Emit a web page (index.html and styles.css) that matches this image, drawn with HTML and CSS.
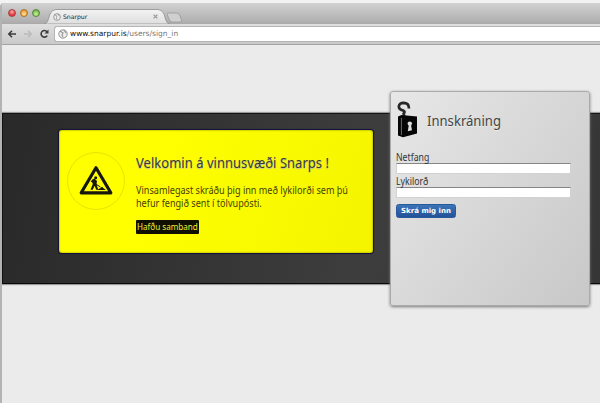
FILE: index.html
```html
<!DOCTYPE html>
<html lang="is">
<head>
<meta charset="utf-8">
<title>Snarpur</title>
<link rel="stylesheet" href="styles.css">
</head>
<body>
<div class="window">
  <header class="tabstrip">
    <div class="lights"><i class="light red"></i><i class="light amber"></i><i class="light green"></i></div>
    <div class="tab">
      <svg class="tab-shape" width="126" height="15" viewBox="0 0 126 15"><defs><linearGradient id="tabfill" x2="0" y2="1"><stop stop-color="#f3f3f3"/><stop offset="1" stop-color="#dedede"/></linearGradient></defs><path d="M0 15C4 14 4 11 6 5Q8 .5 12 .5H114Q118 .5 120 5C122 11 122 14 126 15Z" fill="url(#tabfill)" stroke="#8e8e8e" stroke-width=".8"/></svg>
      <svg class="tab-globe" width="8" height="8" viewBox="0 0 10 10"><circle cx="5" cy="5" r="4.2" fill="#eee" stroke="#888"/><path d="M2 2L5 4 4 6 5 8M6 1L8 4" fill="none" stroke="#999" stroke-width="1.2"/></svg>
      <span class="tab-title">Snarpur</span>
      <svg class="tab-close" width="5" height="5" viewBox="0 0 5 5"><path d="M.6.6L4.4 4.4M4.4.6L.6 4.4" stroke="#999" stroke-width="1.2"/></svg>
    </div>
    <svg class="newtab" width="17" height="11" viewBox="0 0 17 11"><path d="M2 1H11Q13 1 14 4L15.5 8Q16 10 14 10H6Q4 10 3 7L1 2Q1 1 2 1Z" fill="#cfcfcf" stroke="#999" stroke-width=".8"/></svg>
  </header>
  <nav class="toolbar">
    <svg class="nav-icons" width="44" height="12" viewBox="0 0 44 12"><g fill="none" stroke-width="1.6"><path d="M9 6H2M5 2.8L1.8 6 5 9.2" stroke="#3d3d3d"/><path d="M17 6H24M21 2.8L24.2 6 21 9.2" stroke="#bbb"/><path d="M40 3.8A3.3 3.3 0 1 0 40.2 7.6" stroke="#3d3d3d"/></g><path d="M41.5 1.5V5.5H37.5Z" fill="#3d3d3d"/></svg>
    <div class="address">
      <svg width="10" height="10" viewBox="0 0 10 10"><circle cx="5" cy="5" r="4.2" fill="#eee" stroke="#888" stroke-width=".9"/><path d="M2 2L5 4 4 6 5 8M6 1L8 4" fill="none" stroke="#999" stroke-width="1.2"/></svg>
      <span class="url"><b>www.snarpur.is</b>/users/sign_in</span>
    </div>
  </nav>
  <main class="page">
    <div class="band">
      <section class="notice">
        <div class="roundel">
          <svg width="34" height="30" viewBox="0 0 34 30"><path d="M17 2.8L31.8 27.8H2.2Z" fill="none" stroke="#17170c" stroke-width="3.2" stroke-linejoin="round"/><circle cx="16.7" cy="12.8" r="1.5" fill="#17170c"/><path d="M12.5 15L15.5 13.5 18 16 17.5 19.5 19.3 24.7H17.3L15.5 20.8 13.8 24.7H11.5L13.8 19Z" fill="#17170c"/><path d="M12 16.2L21.5 22" stroke="#17170c" stroke-width="1"/><path d="M18.5 25Q20 23 21.5 23.2 23 21 24.5 23.2L27 25Z" fill="#17170c"/></svg>
        </div>
        <div class="notice-text">
          <h1><span>Velkomin á vinnusvæði Snarps !</span></h1>
          <p><span>Vinsamlegast skráðu þig inn með lykilorði sem þú</span><br><span>hefur fengið sent í tölvupósti.</span></p>
          <a class="contact"><span>Hafðu samband</span></a>
        </div>
      </section>
      <form class="login">
        <div class="login-head">
          <svg width="22" height="37" viewBox="0 0 22 37"><path d="M8.2 15L7.6 12.6Q9.6 10.8 7.4 9.6C.5 8 2.2 2 7.6 1.8Q13 1.8 13 7.4" fill="none" stroke="#282828" stroke-width="2.7"/><path d="M2 15.5L5.5 14 21 15.5V32.5L7 36.3 2 34.5Z" fill="#050505"/><path d="M5.4 17V34" stroke="#999" stroke-width=".7"/><circle cx="13.8" cy="22.6" r="2.2" fill="#ddd"/><path d="M13 23H14.8L16 29.2 11.8 30.2Z" fill="#ddd"/></svg>
          <h2><span>Innskráning</span></h2>
        </div>
        <label for="email"><span>Netfang</span></label>
        <input id="email" type="text">
        <label for="password"><span>Lykilorð</span></label>
        <input id="password" type="password">
        <button type="button">Skrá mig inn</button>
      </form>
    </div>
  </main>
</div>
</body>
</html>
```
FILE: styles.css
```css
* { box-sizing: border-box; }
html, body { margin: 0; height: 100%; overflow: hidden; }
body { background: #f3f3f3; padding-top: 3px; font-family: "Noto Sans", sans-serif; color: #333; }
.window { height: 400px; border-left: 2px solid #b3b3b3; border-radius: 4px 0 0 0; background: #ebebeb; overflow: hidden; }
.tabstrip { height: 21px; display: flex; background: linear-gradient(#d2d2d2, #adadad); border-bottom: 1px solid #aaa; }
.lights { display: flex; gap: 4px; padding: 6px 0 0 6px; width: 42px; }
.light { width: 8px; height: 8px; border-radius: 50%; border: 1px solid #8a5a48; flex: none; }
.red { background: radial-gradient(circle at 50% 30%, #ffb2ac, #e3333c 65%); border-color: #a73f3f; }
.amber { background: radial-gradient(circle at 50% 70%, #ffe292, #eb9b32 75%); border-color: #a9702c; }
.green { background: radial-gradient(circle at 50% 70%, #c9f49a, #70b945 75%); border-color: #57843b; }
.tab { display: grid; grid-template-columns: 9px 9px 1fr 5px 9px; width: 126px; margin-top: 6px; height: 15px; align-items: center; }
.tab-shape { grid-area: 1 / 1 / 2 / 6; }
.tab-globe { grid-area: 1 / 2; }
.tab-title { grid-area: 1 / 3; font: 6.1px/10px "DejaVu Sans", sans-serif; padding-left: 1px; color: #222; }
.tab-close { grid-area: 1 / 4; margin-left: -3px; }
.newtab { margin: 9px 0 0 -4px; }
.toolbar { height: 21px; display: flex; align-items: center; background: linear-gradient(#dfdfdf, #c9c9c9); border-bottom: 1px solid #a4a4a4; padding-left: 5px; }
.nav-icons { flex: none; margin-right: 3px; }
.address { flex: 1; height: 16px; background: #fff; border: 1px solid #b5b5b5; border-right: 0; border-radius: 3px 0 0 3px; display: flex; align-items: center; padding-left: 3px; gap: 2px; }
.url { font: 7.5px/12px "DejaVu Sans", sans-serif; color: #777; white-space: nowrap; }
.url b { font-weight: normal; color: #111; }
.page { height: 358px; padding-top: 68px; background: #ebebeb; }
.band { display: flex; align-items: flex-start; height: 171px; padding-left: 57px; background: linear-gradient(100deg, #292929, #3d3d3d 60%, #363636); border-top: 1px solid #141414; border-bottom: 1px solid #080808; border-left: 1px solid #111; box-shadow: 0 -1px 1px #999, 0 1px 1px #999; }
.notice { display: flex; width: 314px; height: 123px; margin: 16px 17px 0 -1px; border-radius: 3px; background: linear-gradient(110deg, #ff0 30%, #f4f400); box-shadow: 0 0 1px 1px #10103c, inset 0 0 2px #777700; }
.roundel { width: 58px; height: 58px; border: 1px solid #e5e500; border-radius: 50%; margin: 22px 0 0 8px; display: grid; place-items: center; padding-bottom: 3px; flex: none; }
.notice-text { padding: 23px 0 0 11px; white-space: nowrap; }
h1, h2, p { margin: 0; font-weight: normal; }
h1 span, p span, h2 span, label span, .contact span { display: inline-block; transform-origin: 0 50%; }
h1 { font-size: 14px; line-height: 20px; color: #3a3a3a; text-shadow: 0 1px 1px #bbb; }
h1 span { transform: scaleX(.932); }
p { margin-top: 11px; font-size: 10px; line-height: 13px; color: #444400; }
p span { transform: scaleX(.91); }
.contact { display: block; width: 63px; height: 14px; margin-top: 10px; background: #100f04; color: #eeee32; font-size: 9px; line-height: 13px; border-radius: 1px; padding-left: 1px; }
.contact span { transform: scaleX(.9); }
.login { width: 200px; height: 215px; margin-top: -23px; padding: 9px 0 0 5px; border: 1px solid #aaa; border-radius: 3px; background: linear-gradient(125deg, #e7e7e7, #c8c8c8); box-shadow: 0 1px 3px #777; flex: none; }
.login-head { display: flex; height: 50px; }
.login-head h2 { font-size: 14px; line-height: 20px; margin: 10px 0 0 9px; color: #444; text-shadow: 0 1px #eee; }
h2 span { transform: scaleX(.935); }
label { display: block; height: 12px; font-size: 10px; line-height: 12px; color: #333; white-space: nowrap; }
label span { transform: scaleX(.87); }
input { display: block; width: 175px; height: 11px; margin: 0 0 1px; padding: 0 2px; background: #fff; border: 1px solid #d2d2d2; border-top-color: #858585; font-size: 8px; outline: 0; }
button { display: block; width: 60px; height: 14px; margin-top: 6px; padding: 0; border: 1px solid #285998; border-radius: 2.5px; background: linear-gradient(#3b74b8, #235299); color: #fff; font: bold 7px/12px "DejaVu Sans", sans-serif; white-space: nowrap; }
```
